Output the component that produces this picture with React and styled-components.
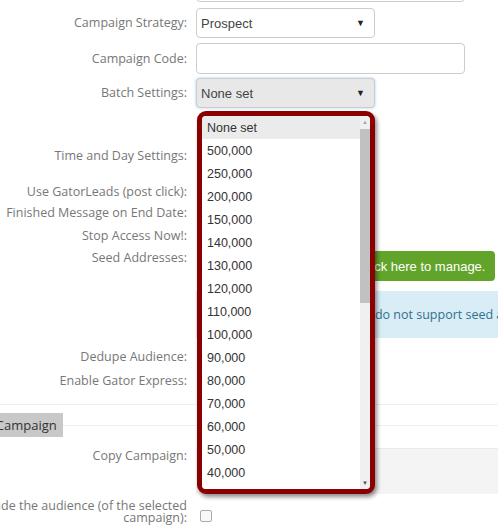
import React from "react";
import styled, { createGlobalStyle } from "styled-components";

const GlobalStyle = createGlobalStyle`
  html, body { margin: 0; padding: 0; background: #fff; overflow: hidden; }
  body { font-family: "Open Sans", "Liberation Sans", sans-serif; }
`;

const Page = styled.div`
  position: relative;
  width: 498px;
  height: 527px;
  overflow: hidden;
`;

const Form = styled.div`
  margin-left: -40px;
  margin-top: -29px;
  width: 640px;
  display: flex;
  flex-direction: column;
`;

const Row = styled.div`
  display: flex;
  align-items: ${(p) => p.$align || "center"};
  gap: 9px;
  margin-top: ${(p) => p.$mt || 0}px;
  min-height: ${(p) => p.$h || 20}px;
`;

const Label = styled.div`
  flex: 0 0 227px;
  text-align: right;
  font-size: 12.5px;
  color: #777;
  line-height: ${(p) => p.$lh || 20}px;
  white-space: ${(p) => (p.$wrap ? "normal" : "nowrap")};
`;

const Control = styled.div`
  flex: 1;
  display: flex;
  flex-direction: column;
  align-items: flex-start;
  position: relative;
`;

const TextInput = styled.div`
  box-sizing: border-box;
  width: 269px;
  height: 31px;
  border: 1px solid #ccc;
  border-radius: 4px;
  background: #fff;
`;

const Select = styled.div`
  box-sizing: border-box;
  width: 179px;
  height: 30px;
  border: 1px solid #ccc;
  border-radius: 4px;
  background: ${(p) => (p.$focused ? "#e8e8e8" : "#fff")};
  box-shadow: ${(p) => (p.$focused ? "0 0 3px rgba(102,175,233,0.6)" : "none")};
  display: flex;
  align-items: center;
  justify-content: space-between;
  padding: 0 9px 0 4px;
  font-family: "Liberation Sans", Arial, sans-serif;
  font-size: 13px;
  color: #444;
`;

const Arrow = styled.span`
  font-size: 9px;
  color: #222;
`;

const Dropdown = styled.div`
  position: absolute;
  top: 33px;
  left: 1px;
  width: 178px;
  height: 383px;
  box-sizing: border-box;
  border: 5px solid #8a0000;
  border-radius: 9px;
  box-shadow: 2px 3px 4px rgba(0, 0, 0, 0.45);
  background: #fff;
  overflow: hidden;
  display: flex;
  z-index: 10;
`;

const OptionList = styled.div`
  flex: 1;
  display: flex;
  flex-direction: column;
  overflow: hidden;
`;

const Option = styled.div`
  flex: 0 0 23px;
  display: flex;
  align-items: center;
  padding-left: 5px;
  font-family: "Liberation Sans", Arial, sans-serif;
  font-size: 12.5px;
  color: #333;
  background: ${(p) => (p.$active ? "#ebebeb" : "#fff")};
`;

const Scrollbar = styled.div`
  flex: 0 0 10px;
  background: #f0f0f0;
  display: flex;
  flex-direction: column;
  align-items: center;
`;

const ScrollArrow = styled.div`
  flex: 0 0 12px;
  display: flex;
  align-items: center;
  justify-content: center;
  font-size: 6px;
  color: ${(p) => p.$color};
  margin-top: ${(p) => (p.$bottom ? "auto" : 0)};
`;

const Thumb = styled.div`
  width: 10px;
  height: 174px;
  margin-top: 1px;
  background: #c1c1c1;
`;

const GreenButton = styled.div`
  margin-top: 3px;
  margin-left: 153px;
  height: 30px;
  box-sizing: border-box;
  padding: 0 10px;
  display: flex;
  align-items: center;
  background: #62a42a;
  border-radius: 4px;
  color: #fff;
  font-family: "Liberation Sans", Arial, sans-serif;
  font-size: 13px;
  white-space: nowrap;
`;

const InfoAlert = styled.div`
  margin-top: 10px;
  height: 47px;
  box-sizing: border-box;
  padding: 0 15px;
  display: flex;
  align-items: center;
  background: #d9edf7;
  color: #31708f;
  font-size: 12.5px;
  white-space: nowrap;
  width: 460px;
`;

const Divider = styled.div`
  margin-top: ${(p) => p.$mt || 0}px;
  height: 1px;
  background: #eee;
`;

const LegendRow = styled.div`
  margin-top: 8px;
  display: flex;
  align-items: center;
`;

const LegendBox = styled.div`
  margin-left: -4px;
  height: 24px;
  box-sizing: border-box;
  padding: 0 6px;
  display: flex;
  align-items: center;
  background: #c8c8c8;
  color: #333;
  font-size: 13px;
  white-space: nowrap;
`;

const LegendLine = styled.div`
  flex: 1;
  height: 1px;
  background: #eee;
`;

const Well = styled.div`
  width: 420px;
  height: 46px;
  background: #f4f4f4;
  border-top: 1px solid #eaeaea;
  box-sizing: border-box;
`;

const Checkbox = styled.span`
  display: block;
  width: 10px;
  height: 10px;
  margin: 0 0 2px 4px;
  border: 1px solid #aaa;
  border-radius: 2px;
  background: #f8f8f8;
`;

const options = [
  "None set",
  "500,000",
  "250,000",
  "200,000",
  "150,000",
  "140,000",
  "130,000",
  "120,000",
  "110,000",
  "100,000",
  "90,000",
  "80,000",
  "70,000",
  "60,000",
  "50,000",
  "40,000",
  "30,000",
];

export default function App() {
  return (
    <Page>
      <GlobalStyle />
      <Form>
        <Row $h={31}>
          <Label>Campaign Name:</Label>
          <Control>
            <TextInput />
          </Control>
        </Row>
        <Row $mt={6} $h={30}>
          <Label>Campaign Strategy:</Label>
          <Control>
            <Select>
              <span>Prospect</span>
              <Arrow>▼</Arrow>
            </Select>
          </Control>
        </Row>
        <Row $mt={5} $h={31}>
          <Label>Campaign Code:</Label>
          <Control>
            <TextInput />
          </Control>
        </Row>
        <Row $mt={4} $h={30}>
          <Label>Batch Settings:</Label>
          <Control>
            <Select $focused>
              <span>None set</span>
              <Arrow>▼</Arrow>
            </Select>
            <Dropdown>
              <OptionList>
                {options.map((o, i) => (
                  <Option key={o} $active={i === 0}>
                    {o}
                  </Option>
                ))}
              </OptionList>
              <Scrollbar>
                <ScrollArrow $color="#a8a8a8">▲</ScrollArrow>
                <Thumb />
                <ScrollArrow $bottom $color="#505050">▼</ScrollArrow>
              </Scrollbar>
            </Dropdown>
          </Control>
        </Row>
        <Row $mt={38}>
          <Label>Time and Day Settings:</Label>
          <Control />
        </Row>
        <Row $mt={16}>
          <Label>Use GatorLeads (post click):</Label>
          <Control />
        </Row>
        <Row $mt={1}>
          <Label>Finished Message on End Date:</Label>
          <Control />
        </Row>
        <Row $mt={3}>
          <Label>Stop Access Now!:</Label>
          <Control />
        </Row>
        <Row $mt={2} $align="flex-start">
          <Label>Seed Addresses:</Label>
          <Control>
            <GreenButton>Click here to manage.</GreenButton>
            <InfoAlert>Please note: some list types do not support seed addresses.</InfoAlert>
          </Control>
        </Row>
        <Row $mt={9}>
          <Label>Dedupe Audience:</Label>
          <Control />
        </Row>
        <Row $mt={4}>
          <Label>Enable Gator Express:</Label>
          <Control />
        </Row>
        <Divider $mt={13} />
        <LegendRow>
          <LegendBox>Copy Campaign</LegendBox>
          <LegendLine />
        </LegendRow>
        <Row $mt={11} $align="flex-start" $h={46}>
          <Label $lh={16}>Copy Campaign:</Label>
          <Control>
            <Well />
          </Control>
        </Row>
        <Row $mt={6} $align="flex-end">
          <Label $lh={12} $wrap>
            Exclude the audience (of the selected
            <br />
            campaign):
          </Label>
          <Control>
            <Checkbox />
          </Control>
        </Row>
      </Form>
    </Page>
  );
}
